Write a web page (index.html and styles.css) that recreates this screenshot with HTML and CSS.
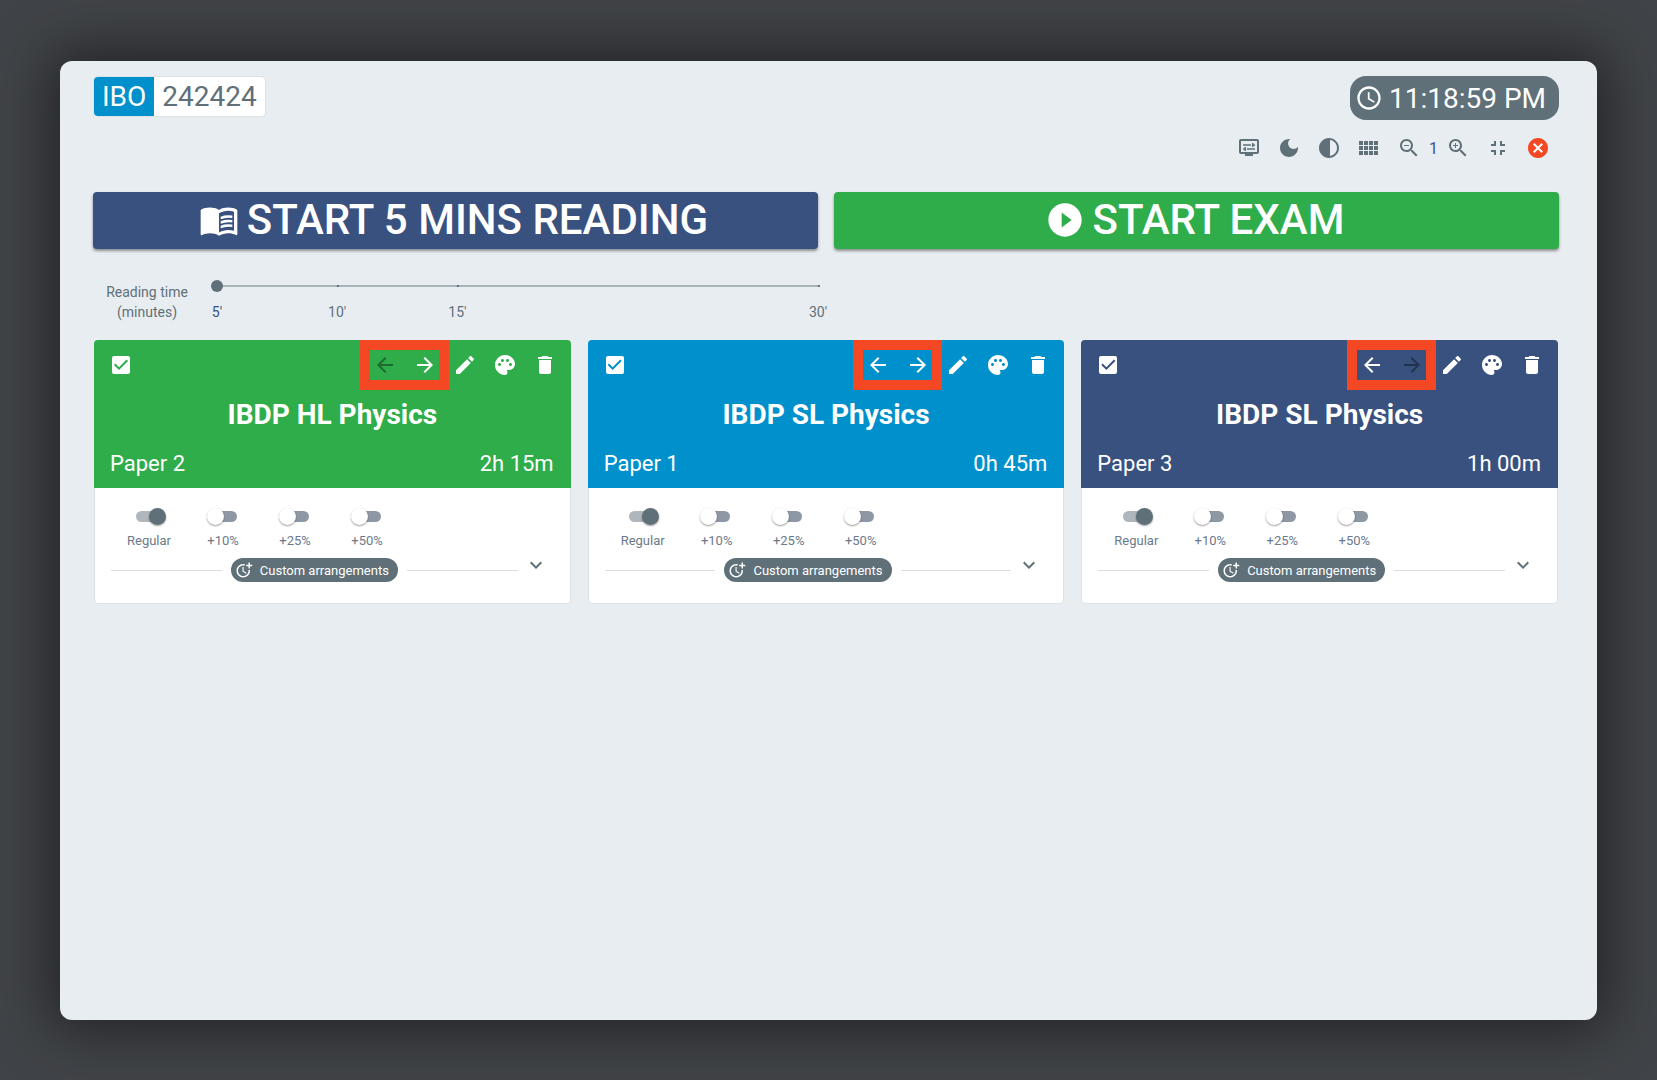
FILE: index.html
```html
<!DOCTYPE html>
<html lang="en">
<head>
<meta charset="utf-8">
<title>Exam Clock</title>
<link rel="stylesheet" href="styles.css">
</head>
<body>
<svg class="sprite" aria-hidden="true">
  <symbol id="i-left" viewBox="0 0 24 24"><path d="M20 11H7.83l5.59-5.59L12 4l-8 8 8 8 1.41-1.41L7.83 13H20v-2z"/></symbol>
  <symbol id="i-right" viewBox="0 0 24 24"><path d="M12 4l-1.41 1.41L16.17 11H4v2h12.17l-5.58 5.59L12 20l8-8z"/></symbol>
  <symbol id="i-edit" viewBox="0 0 24 24"><path d="M3 17.25V21h3.75L17.81 9.94l-3.75-3.75L3 17.25zM20.71 7.04c.39-.39.39-1.02 0-1.41l-2.34-2.34c-.39-.39-1.02-.39-1.41 0l-1.83 1.83 3.75 3.75 1.83-1.83z"/></symbol>
  <symbol id="i-palette" viewBox="0 0 24 24"><path d="M12 2C6.49 2 2 6.49 2 12s4.49 10 10 10c1.38 0 2.5-1.12 2.5-2.5 0-.61-.23-1.2-.64-1.67-.08-.1-.13-.21-.13-.33 0-.28.22-.5.5-.5H16c3.31 0 6-2.69 6-6 0-4.96-4.49-9-10-9zm5.5 11c-.83 0-1.5-.67-1.5-1.5s.67-1.5 1.5-1.5 1.5.67 1.5 1.5-.67 1.5-1.5 1.5zm-3-4c-.83 0-1.5-.67-1.5-1.5S13.67 6 14.5 6s1.500.67 1.500 1.500S15.330 9 14.500 9zM5 11.500C5 10.670 5.670 10 6.500 10S8 10.670 8 11.500 7.330 13 6.500 13 5 12.330 5 11.500zm6-4C11 8.330 10.330 9 9.500 9S8 8.330 8 7.500 8.670 6 9.500 6s1.500.670 1.500 1.500z"/></symbol>
  <symbol id="i-delete" viewBox="0 0 24 24"><path d="M6 19c0 1.1.9 2 2 2h8c1.1 0 2-.9 2-2V7H6v12zM19 4h-3.5l-1-1h-5l-1 1H5v2h14V4z"/></symbol>
  <symbol id="i-more-time" viewBox="0 0 24 24"><path d="M10 8v6l4.700 2.900.800-1.200-4-2.400V8z"/><path d="M17.920 12c.05.330.08.660.08 1 0 3.900-3.100 7-7 7s-7-3.100-7-7 3.100-7 7-7c.7 0 1.370.1 2 .290V4.230c-.64-.15-1.310-.23-2-.23-5 0-9 4-9 9s4 9 9 9 9-4 9-9c0-.34-.02-.67-.06-1h-2.020z"/><path d="M20 5V2h-2v3h-3v2h3v3h2V7h3V5z"/></symbol>
  <symbol id="i-expand" viewBox="0 0 24 24"><path d="M16.590 8.590L12 13.170 7.410 8.590 6 10l6 6 6-6z"/></symbol>
</svg>

<main class="panel">
  <header class="topbar">
    <div class="school"><span class="school-name">IBO</span><span class="school-code">242424</span></div>
    <div class="clock">
      <svg class="icon" viewBox="0 0 24 24" aria-hidden="true"><path d="M11.990 2C6.470 2 2 6.480 2 12s4.470 10 9.990 10C17.520 22 22 17.520 22 12S17.520 2 11.990 2zM12 20c-4.420 0-8-3.580-8-8s3.580-8 8-8 8 3.580 8 8-3.580 8-8 8z"/><path d="M12.500 7H11v6l5.250 3.150.750-1.230-4.500-2.670z"/></svg>
      <time>11:18:59 PM</time>
    </div>
  </header>

  <nav class="tools" aria-label="Display">
    <button class="icon-btn" aria-label="Display settings"><svg class="icon" viewBox="0 0 24 24"><path d="M20 3H4c-1.100 0-2 .9-2 2v11c0 1.100.9 2 2 2h4v2h8v-2h4c1.100 0 2-.9 2-2V5c0-1.100-.9-2-2-2zm0 13H4V5h16v11z"/><path d="M6 8.250h8v1.500H6zM16.500 9.750H18v-1.500h-1.500V7H15v4h1.500zM10 12.250h8v1.500h-8zM7.500 15H9v-4H7.500v1.250H6v1.500h1.500z"/></svg></button>
    <button class="icon-btn" aria-label="Dark mode"><svg class="icon" viewBox="0 0 24 24"><path d="M12 3c-4.970 0-9 4.030-9 9s4.030 9 9 9 9-4.030 9-9c0-.46-.04-.92-.1-1.360-.98 1.370-2.580 2.260-4.400 2.260-2.980 0-5.400-2.420-5.400-5.400 0-1.810.89-3.420 2.260-4.400-.44-.06-.9-.1-1.360-.1z"/></svg></button>
    <button class="icon-btn" aria-label="Contrast"><svg class="icon" viewBox="0 0 24 24"><path d="M12 22c5.520 0 10-4.480 10-10S17.520 2 12 2 2 6.480 2 12s4.480 10 10 10zm1-17.930c3.940.49 7 3.850 7 7.930s-3.050 7.440-7 7.930V4.070z"/></svg></button>
    <button class="icon-btn" aria-label="Grid"><svg class="icon" viewBox="0 0 24 24"><path d="M2 5h4v4H2zM7 5h4v4H7zM12 5h4v4h-4zM17 5h4v4h-4zM2 10h4v4H2zM7 10h4v4H7zM12 10h4v4h-4zM17 10h4v4h-4zM2 15h4v4H2zM7 15h4v4H7zM12 15h4v4h-4zM17 15h4v4h-4z"/></svg></button>
    <button class="icon-btn" aria-label="Zoom out"><svg class="icon" viewBox="0 0 24 24"><path d="M15.500 14h-.79l-.28-.27C15.410 12.590 16 11.110 16 9.500 16 5.910 13.090 3 9.500 3S3 5.910 3 9.500 5.910 16 9.500 16c1.610 0 3.090-.59 4.230-1.570l.27.28v.79l5 4.990L20.490 19l-4.990-5zm-6 0C7.010 14 5 11.990 5 9.500S7.010 5 9.500 5 14 7.010 14 9.500 11.990 14 9.500 14zM7 9h5v1H7z"/></svg></button>
    <span class="zoom-level">1</span>
    <button class="icon-btn" aria-label="Zoom in"><svg class="icon" viewBox="0 0 24 24"><path d="M15.500 14h-.79l-.28-.27C15.410 12.590 16 11.110 16 9.500 16 5.910 13.090 3 9.500 3S3 5.910 3 9.500 5.910 16 9.500 16c1.610 0 3.090-.59 4.230-1.570l.27.28v.79l5 4.990L20.490 19l-4.990-5zm-6 0C7.010 14 5 11.990 5 9.500S7.010 5 9.500 5 14 7.010 14 9.500 11.990 14 9.500 14z"/><path d="M12 10h-2v2H9v-2H7V9h2V7h1v2h2v1z"/></svg></button>
    <button class="icon-btn" aria-label="Exit full screen"><svg class="icon" viewBox="0 0 24 24"><path d="M5 16h3v3h2v-5H5v2zm3-8H5v2h5V5H8v3zm6 11h2v-3h3v-2h-5v5zm2-11V5h-2v5h5V8h-3z"/></svg></button>
    <button class="icon-btn icon-btn-close" aria-label="Close"><svg class="icon" viewBox="0 0 24 24"><circle class="cross" cx="12" cy="12" r="8"/><path d="M12 2C6.470 2 2 6.470 2 12s4.470 10 10 10 10-4.470 10-10S17.530 2 12 2zm5 13.590L15.590 17 12 13.410 8.410 17 7 15.590 10.590 12 7 8.410 8.410 7 12 10.590 15.590 7 17 8.410 13.410 12 17 15.590z"/></svg></button>
  </nav>

  <section class="starts">
    <button class="start start-reading"><svg class="start-icon" viewBox="0 0 24 24" aria-hidden="true"><path d="M17.500 4.500c-1.950 0-4.050.4-5.500 1.500-1.450-1.100-3.550-1.500-5.500-1.500S2.450 4.900 1 6v14.650c0 .25.25.5.5.5.1 0 .15-.05.25-.05C3.100 20.450 5.050 20 6.500 20c1.950 0 4.050.4 5.500 1.500 1.350-.85 3.800-1.500 5.500-1.500 1.650 0 3.350.3 4.750 1.050.1.05.15.05.25.05.25 0 .5-.25.5-.5V6c-1.400-1.050-3.550-1.500-5.500-1.500zM21 18.500c-1.100-.35-2.300-.5-3.500-.5-1.700 0-4.150.65-5.500 1.500V8c1.350-.85 3.800-1.500 5.500-1.500 1.200 0 2.400.15 3.500.5v11.500z"/><path d="M13 10q3-1.300 7-.7v1.500q-4-.5-7 .8zM13 12.700q3-1.300 7-.7v1.500q-4-.5-7 .8zM13 15.400q3-1.300 7-.7v1.500q-4-.5-7 .8z"/></svg>START 5 MINS READING</button>
    <button class="start start-exam"><svg class="start-icon" viewBox="0 0 24 24" aria-hidden="true"><path d="M12 2C6.480 2 2 6.480 2 12s4.480 10 10 10 10-4.480 10-10S17.520 2 12 2zM10 16.500v-9l6 4.500-6 4.500z"/></svg>START EXAM</button>
  </section>

  <section class="reading">
    <label class="reading-label" for="reading-time">Reading time (minutes)</label>
    <div class="slider">
      <input class="slider-input" id="reading-time" type="range" min="5" max="30" step="5" value="5">
      <ul class="marks">
        <li class="mark mark-active" style="left:0%">5'</li>
        <li class="mark" style="left:20%">10'</li>
        <li class="mark" style="left:40%">15'</li>
        <li class="mark" style="left:100%">30'</li>
      </ul>
    </div>
  </section>

  <section class="cards">
    <article class="card">
      <div class="card-head card-head-green">
        <div class="card-tools">
          <input class="tick" type="checkbox" checked aria-label="Select IBDP HL Physics Paper 2">
          <div class="movers">
            <button class="icon-btn" disabled aria-label="Move left"><svg class="icon"><use href="#i-left"/></svg></button>
            <button class="icon-btn" aria-label="Move right"><svg class="icon"><use href="#i-right"/></svg></button>
          </div>
          <button class="icon-btn" aria-label="Edit"><svg class="icon"><use href="#i-edit"/></svg></button>
          <button class="icon-btn" aria-label="Colour"><svg class="icon"><use href="#i-palette"/></svg></button>
          <button class="icon-btn" aria-label="Delete"><svg class="icon"><use href="#i-delete"/></svg></button>
        </div>
        <h2 class="card-title">IBDP HL Physics</h2>
        <div class="card-info"><span>Paper 2</span><span>2h 15m</span></div>
      </div>
      <div class="card-body">
        <div class="switches">
          <label class="switch"><input class="switch-input" type="checkbox" checked>Regular</label>
          <label class="switch"><input class="switch-input" type="checkbox">+10%</label>
          <label class="switch"><input class="switch-input" type="checkbox">+25%</label>
          <label class="switch"><input class="switch-input" type="checkbox">+50%</label>
        </div>
        <div class="custom">
          <div class="custom-line"><button class="chip"><svg class="chip-icon"><use href="#i-more-time"/></svg>Custom arrangements</button></div>
          <button class="expand" aria-label="Expand"><svg class="icon"><use href="#i-expand"/></svg></button>
        </div>
      </div>
    </article>

    <article class="card">
      <div class="card-head card-head-blue">
        <div class="card-tools">
          <input class="tick" type="checkbox" checked aria-label="Select IBDP SL Physics Paper 1">
          <div class="movers">
            <button class="icon-btn" aria-label="Move left"><svg class="icon"><use href="#i-left"/></svg></button>
            <button class="icon-btn" aria-label="Move right"><svg class="icon"><use href="#i-right"/></svg></button>
          </div>
          <button class="icon-btn" aria-label="Edit"><svg class="icon"><use href="#i-edit"/></svg></button>
          <button class="icon-btn" aria-label="Colour"><svg class="icon"><use href="#i-palette"/></svg></button>
          <button class="icon-btn" aria-label="Delete"><svg class="icon"><use href="#i-delete"/></svg></button>
        </div>
        <h2 class="card-title">IBDP SL Physics</h2>
        <div class="card-info"><span>Paper 1</span><span>0h 45m</span></div>
      </div>
      <div class="card-body">
        <div class="switches">
          <label class="switch"><input class="switch-input" type="checkbox" checked>Regular</label>
          <label class="switch"><input class="switch-input" type="checkbox">+10%</label>
          <label class="switch"><input class="switch-input" type="checkbox">+25%</label>
          <label class="switch"><input class="switch-input" type="checkbox">+50%</label>
        </div>
        <div class="custom">
          <div class="custom-line"><button class="chip"><svg class="chip-icon"><use href="#i-more-time"/></svg>Custom arrangements</button></div>
          <button class="expand" aria-label="Expand"><svg class="icon"><use href="#i-expand"/></svg></button>
        </div>
      </div>
    </article>

    <article class="card">
      <div class="card-head card-head-navy">
        <div class="card-tools">
          <input class="tick" type="checkbox" checked aria-label="Select IBDP SL Physics Paper 3">
          <div class="movers">
            <button class="icon-btn" aria-label="Move left"><svg class="icon"><use href="#i-left"/></svg></button>
            <button class="icon-btn" disabled aria-label="Move right"><svg class="icon"><use href="#i-right"/></svg></button>
          </div>
          <button class="icon-btn" aria-label="Edit"><svg class="icon"><use href="#i-edit"/></svg></button>
          <button class="icon-btn" aria-label="Colour"><svg class="icon"><use href="#i-palette"/></svg></button>
          <button class="icon-btn" aria-label="Delete"><svg class="icon"><use href="#i-delete"/></svg></button>
        </div>
        <h2 class="card-title">IBDP SL Physics</h2>
        <div class="card-info"><span>Paper 3</span><span>1h 00m</span></div>
      </div>
      <div class="card-body">
        <div class="switches">
          <label class="switch"><input class="switch-input" type="checkbox" checked>Regular</label>
          <label class="switch"><input class="switch-input" type="checkbox">+10%</label>
          <label class="switch"><input class="switch-input" type="checkbox">+25%</label>
          <label class="switch"><input class="switch-input" type="checkbox">+50%</label>
        </div>
        <div class="custom">
          <div class="custom-line"><button class="chip"><svg class="chip-icon"><use href="#i-more-time"/></svg>Custom arrangements</button></div>
          <button class="expand" aria-label="Expand"><svg class="icon"><use href="#i-expand"/></svg></button>
        </div>
      </div>
    </article>
  </section>
</main>
</body>
</html>
```
FILE: styles.css
```css
:root {
  --slate: #5f7079;
  --navy: #39517f;
  --green: #30ad4b;
  --blue: #0090cc;
  --red: #f44723;
  --page: #e8edf1;
}

* { box-sizing: border-box; }

body {
  margin: 0;
  min-height: 100vh;
  padding: 61px 60px 60px;
  display: flex;
  background: #404347;
  font-family: Roboto, "Liberation Sans", sans-serif;
  font-size: 14px;
  color: var(--slate);
}

button {
  margin: 0;
  padding: 0;
  border: 0;
  background: none;
  color: inherit;
  font: inherit;
  cursor: pointer;
}

.sprite { position: absolute; width: 0; height: 0; }

.icon { display: block; width: 24px; height: 24px; fill: currentColor; }

.panel {
  flex: 1;
  min-width: 0;
  padding: 15px 38px 32px 33px;
  border-radius: 12px;
  background: var(--page);
  box-shadow: 0 0 56px 8px rgba(0, 0, 0, .5);
}

.topbar {
  display: flex;
  justify-content: space-between;
  align-items: flex-start;
}

.school {
  display: flex;
  margin: 1px;
  border-radius: 4px;
  overflow: hidden;
  background: #fff;
  box-shadow: 0 0 0 1px #dde2e6;
  font-size: 28px;
  line-height: 39px;
}
.school-name { padding: 0 8px; background: var(--blue); color: #fff; }
.school-code { padding: 0 8px; }

.clock {
  display: flex;
  align-items: center;
  gap: 6px;
  height: 44px;
  padding: 0 13px 0 5px;
  border-radius: 16px;
  background: var(--slate);
  color: #fff;
  font-size: 28px;
}
.clock .icon { width: 28px; height: 28px; }

.icon-btn {
  display: flex;
  align-items: center;
  justify-content: center;
  width: 40px;
  height: 40px;
}
.icon-btn:disabled { color: rgba(0, 0, 0, .38); }
.icon-btn-close { color: var(--red); }
.cross { fill: #fff; }

.tools {
  display: flex;
  justify-content: flex-end;
  align-items: center;
  margin-top: 8px;
  padding-right: 1px;
}
.zoom-level { width: 9px; font-size: 16px; text-align: center; color: var(--navy); }

.starts {
  display: grid;
  grid-template-columns: 1fr 1fr;
  gap: 16px;
  margin-top: 24px;
}
.start {
  display: flex;
  align-items: center;
  justify-content: center;
  gap: 8px;
  height: 57px;
  padding: 0 4px 2px 0;
  border-radius: 4px;
  box-shadow: 0 2px 3px rgba(0, 0, 0, .4);
  color: #fff;
  font-size: 42px;
  font-weight: 500;
  line-height: 56px;
}
.start-reading { background: var(--navy); }
.start-exam { background: var(--green); }
.start-icon { width: 40px; height: 40px; fill: currentColor; }

.reading {
  display: flex;
  width: 50%;
  margin-top: 31px;
  padding-right: 2px;
}
.reading-label {
  width: 108px;
  padding: 2px 8px 0;
  line-height: 20px;
  text-align: center;
}
.slider { flex: 1; margin-left: 10px; }
.slider-input {
  display: block;
  appearance: none;
  width: 100%;
  height: 12px;
  margin: 0;
  background: linear-gradient(#a9b4ba, #a9b4ba) center / calc(100% - 12px) 2px no-repeat;
}
.slider-input::-webkit-slider-thumb {
  appearance: none;
  width: 12px;
  height: 12px;
  border-radius: 50%;
  background: var(--slate);
}
.marks {
  position: relative;
  height: 36px;
  margin: 0 6px;
  padding: 0;
  list-style: none;
}
.mark {
  position: absolute;
  top: 10px;
  line-height: 20px;
  transform: translateX(-50%);
}
.mark::before {
  content: "";
  position: absolute;
  top: -17px;
  left: 50%;
  width: 2px;
  height: 2px;
  background: var(--slate);
}
.mark-active { color: var(--navy); }

.cards {
  display: grid;
  grid-template-columns: repeat(3, 1fr);
  gap: 17px;
  margin: 12px 1px 0;
}
.card {
  border: 1px solid #dde2e6;
  border-radius: 4px;
  background: #fff;
}
.card-head {
  margin: -1px -1px 0;
  padding: 5px 6px 8px 16px;
  border-radius: 4px 4px 0 0;
  color: #fff;
}
.card-head-green { background: var(--green); }
.card-head-blue { background: var(--blue); }
.card-head-navy { background: var(--navy); }

.card-tools { display: flex; align-items: center; }
.tick {
  appearance: none;
  width: 18px;
  height: 18px;
  margin: 0 auto 0 2px;
  border-radius: 2px;
  background: #fff;
}
.tick::before {
  content: "";
  display: block;
  height: 100%;
  clip-path: polygon(39% 78%, 11% 50%, 19% 42%, 39% 62%, 81% 20%, 89% 28%);
}
.card-head-green .tick::before { background: var(--green); }
.card-head-blue .tick::before { background: var(--blue); }
.card-head-navy .tick::before { background: var(--navy); }

.movers { position: relative; display: flex; }
.movers::after {
  content: "";
  position: absolute;
  inset: -5px -4px -5px -5px;
  border: 10px solid var(--red);
  pointer-events: none;
}

.card-title {
  margin: 12px 10px 0 0;
  font-size: 28px;
  font-weight: 700;
  line-height: 36px;
  text-align: center;
}
.card-info {
  display: flex;
  justify-content: space-between;
  margin: 15px 11px 0 0;
  font-size: 22px;
  line-height: 32px;
}

.card-body { padding: 16px 16px 21px; }
.switches { display: flex; gap: 32px; padding-left: 16px; }
.switch {
  display: flex;
  flex-direction: column;
  align-items: center;
  min-width: 40px;
  font-size: 13px;
  line-height: 20px;
  color: #6b7a8c;
}
.switch-input {
  position: relative;
  appearance: none;
  display: flex;
  align-items: center;
  width: 33px;
  height: 25px;
  margin: 0 0 2px;
}
.switch-input::before {
  content: "";
  width: 27px;
  height: 11px;
  margin: 0 3px;
  border-radius: 6px;
  background: #8e98a5;
}
.switch-input::after {
  content: "";
  position: absolute;
  left: 0;
  width: 17px;
  height: 17px;
  border-radius: 50%;
  background: #fff;
  box-shadow: 0 1px 2px rgba(0, 0, 0, .4);
}
.switch-input:checked::before { background: #afb7bc; }
.switch-input:checked::after { left: 16px; background: var(--slate); }

.custom { display: flex; align-items: flex-start; margin-top: 7px; }
.custom-line { flex: 1; display: flex; align-items: center; gap: 9px; }
.custom-line::before,
.custom-line::after { content: ""; flex: 1; height: 1px; background: #dadfe2; }
.chip {
  display: flex;
  align-items: center;
  gap: 7px;
  height: 24px;
  padding: 0 9px 0 4px;
  border-radius: 12px;
  background: var(--slate);
  color: #fff;
  font-size: 13px;
}
.chip-icon { width: 18px; height: 18px; fill: currentColor; }
.expand { margin: -5px 6px 0; }
```
